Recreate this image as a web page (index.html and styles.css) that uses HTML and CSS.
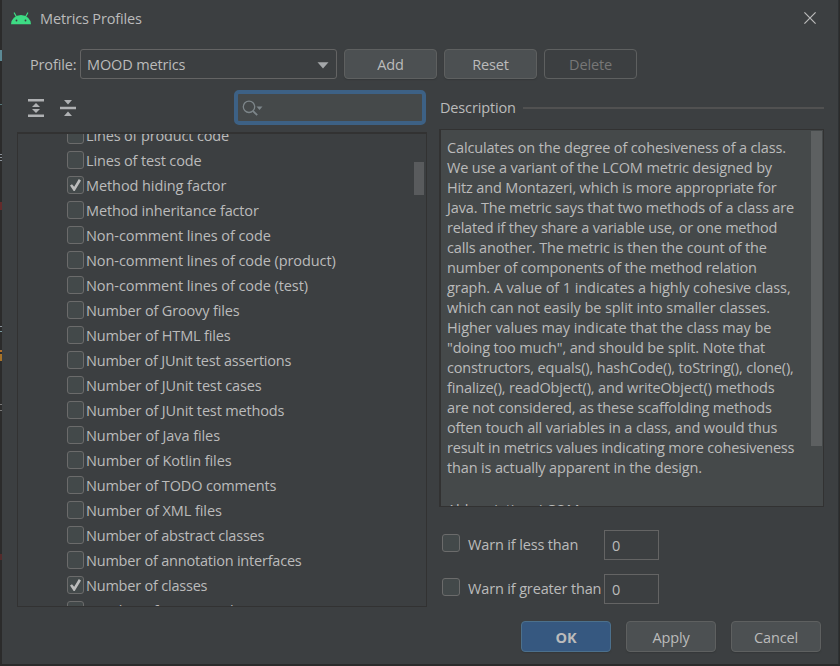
FILE: index.html
```
<!DOCTYPE html>
<html lang="en">
<head>
<meta charset="utf-8">
<title>Metrics Profiles</title>
<link rel="stylesheet" href="styles.css">
</head>
<body>
<div class="dialog">
  <header class="titlebar">
    <svg class="logo" width="20" height="13" viewBox="0 0 20 13"><path d="M0 12.300a10 9.300 0 0 1 20 0z" fill="#3ddc84"/><path d="M3.300 1l2.200 4M16.700 1l-2.200 4" stroke="#3ddc84" stroke-width="1.200" stroke-linecap="round"/><circle cx="5.500" cy="8.500" r=".9" fill="#3c3f41"/><circle cx="14.500" cy="8.500" r=".9" fill="#3c3f41"/></svg>
    <span class="title">Metrics Profiles</span>
    <svg class="close" width="12" height="12" viewBox="0 0 12 12"><path d="M.4.4l11.200 11.200M11.600.4L.4 11.600" stroke="#bbb" stroke-width="1.200"/></svg>
  </header>
  <div class="profile">
    <span class="profile-label">Profile:</span>
    <div class="combo"><span>MOOD metrics</span><svg width="12" height="7" viewBox="0 0 12 7"><path d="M.5.3h11L6 6.500z" fill="#a4a7a9"/></svg></div>
    <button class="btn">Add</button><button class="btn">Reset</button><button class="btn off">Delete</button>
  </div>
  <main class="content">
    <section class="left">
      <div class="tools">
        <svg width="16" height="18" viewBox="0 0 16 18" fill="#afb1b3"><path d="M0 0h16v2.500H0zM0 15.500h16V18H0zM8 4l4 4H4zM8 14l4-4H4z"/></svg>
        <svg width="16" height="18" viewBox="0 0 16 18" fill="#afb1b3"><path d="M0 7.800h16v2.400H0zM8 5.500L12 1H4zM8 12.500l4 4.500H4z"/></svg>
        <div class="search"><svg width="21" height="16" viewBox="0 0 21 16"><circle cx="7" cy="6.800" r="5.700" fill="none" stroke="#7d868a" stroke-width="1.300"/><path d="M11 11l4.200 4.200" stroke="#7d868a" stroke-width="1.800"/><path d="M14.500 6.500h6L17.500 10z" fill="#7d868a"/></svg></div>
      </div>
      <div class="tree">
        <ul class="rows">
          <li><i class="cb"></i>Lines of product code</li>
          <li><i class="cb"></i>Lines of test code</li>
          <li class="wide"><i class="cb on"></i>Method hiding factor</li>
          <li><i class="cb"></i>Method inheritance factor</li>
          <li class="wide"><i class="cb"></i>Non-comment lines of code</li>
          <li class="wide"><i class="cb"></i>Non-comment lines of code (product)</li>
          <li class="wide"><i class="cb"></i>Non-comment lines of code (test)</li>
          <li><i class="cb"></i>Number of Groovy files</li>
          <li><i class="cb"></i>Number of HTML files</li>
          <li class="tight"><i class="cb"></i>Number of JUnit test assertions</li>
          <li><i class="cb"></i>Number of JUnit test cases</li>
          <li><i class="cb"></i>Number of JUnit test methods</li>
          <li class="wide"><i class="cb"></i>Number of Java files</li>
          <li class="wide"><i class="cb"></i>Number of Kotlin files</li>
          <li><i class="cb"></i>Number of TODO comments</li>
          <li class="wide"><i class="cb"></i>Number of XML files</li>
          <li class="tight"><i class="cb"></i>Number of abstract classes</li>
          <li class="tight"><i class="cb"></i>Number of annotation interfaces</li>
          <li class="tight"><i class="cb on"></i>Number of classes</li>
          <li><i class="cb"></i><span class="low">Number of concrete classes</span></li>
        </ul>
        <div class="thumb"></div>
      </div>
    </section>
    <section class="right">
      <h2 class="heading">Description</h2>
      <div class="desc">
        <p>Calculates on the degree of cohesiveness of a class.<br>We use a variant of the LCOM metric designed by<br>Hitz and Montazeri, which is more appropriate for<br>Java. The metric says that two methods of a class are<br><span class="tight">related if they share a variable use, or one method</span><br>calls another. The metric is then the count of the<br>number of components of the method relation<br><span class="wide">graph. A value of 1 indicates a highly cohesive class,</span><br><span class="wide">which can not easily be split into smaller classes.</span><br><span class="wide">Higher values may indicate that the class may be</span><br>"doing too much", and should be split. Note that<br>constructors, equals(), hashCode(), toString(), clone(),<br>finalize(), readObject(), and writeObject() methods<br>are not considered, as these scaffolding methods<br>often touch all variables in a class, and would thus<br><span class="tight">result in metrics values indicating more cohesiveness</span><br>than is actually apparent in the design.</p>
        <p class="more">Abbreviation: LCOM</p>
        <div class="bar"></div>
      </div>
      <div class="warn"><i class="cb"></i><span>Warn if less than</span><div class="num">0</div></div>
      <div class="warn"><i class="cb"></i><span>Warn if greater than</span><div class="num">0</div></div>
    </section>
  </main>
  <footer class="actions"><button class="btn ok">OK</button><button class="btn">Apply</button><button class="btn">Cancel</button></footer>
</div>
</body>
</html>
```
FILE: styles.css
```
* { box-sizing: border-box; }
body {
  margin: 0; color: #bbbbbb; font: 14.500px/20px "Open Sans", "Noto Sans", sans-serif; letter-spacing: -0.150px;
  /* sliver of the editor behind the dialog */
  background: #2b2b2b linear-gradient(#2b2b2b 50px, #5c8a96 50px 61px, #2b2b2b 61px 104px, #55777a 104px 105px, #2b2b2b 105px 154px, #8a929a 154px 155px, #2b2b2b 155px 157px, #8a929a 157px 158px, #2b2b2b 158px 160px, #8a929a 160px 161px, #2b2b2b 161px 202px, #642b2b 202px 210px, #2b2b2b 210px 326px, #8a929a 326px 327px, #2b2b2b 327px 331px, #7b9aa0 331px 332px, #2b2b2b 332px 350px, #b06f2b 350px 352px, #2b2b2b 352px 354px, #a87328 354px 361px, #2b2b2b 361px 404px, #777 404px 405px, #2b2b2b 405px 410px, #777 410px 411px, #2b2b2b 411px 554px, #542b2b 554px 560px, #2b2b2b 560px) no-repeat 0 0 / 2px 666px;
}
.dialog { width: 837px; height: 665px; margin-left: 2px; background: #3c3f41; border-right: 1px solid #2e3133; border-bottom: 1px solid #2b2b2b; overflow: hidden; white-space: nowrap; }
.wide { letter-spacing: -0.080px; }
.tight { letter-spacing: -0.210px; }
.titlebar { height: 37px; display: flex; align-items: center; padding: 0 22px 0 9px; }
.logo { margin-right: 9px; }
.close { margin: -2px 0 0 auto; }
.profile { height: 53px; padding: 12px 0 0 28px; display: flex; gap: 7px; align-items: flex-start; }
.profile-label { width: 50px; line-height: 31px; margin-right: -7px; }
.combo { width: 257px; height: 30px; border: 1px solid #646464; border-radius: 3px; padding: 2px 7px 0 6px; display: flex; align-items: center; justify-content: space-between; }
.btn { width: 93px; height: 31px; padding: 2px 0 0; border: 1px solid #5e6060; border-radius: 4px; background: #4c5052; color: #bbb; font: inherit; letter-spacing: inherit; box-shadow: 0 1px 1px #35383a; }
.profile .btn { height: 30px; }
.btn.off { background: transparent; color: #777; box-shadow: none; }
.content { display: flex; height: 517px; padding-left: 15px; gap: 12px; }
.left { width: 410px; }
.tools { height: 42px; display: flex; align-items: flex-start; padding-left: 11px; gap: 16px; }
.tools > svg { margin-top: 9px; }
.search { width: 192px; height: 35px; margin: 0 1px 0 auto; border: 4px solid #3d6185; border-radius: 5px; background: #45494a; padding: 6px 4px; }
.search svg { display: block; }
.tree { position: relative; height: 475px; border: 1px solid #323232; border-top-width: 2px; overflow: hidden; }
.rows { list-style: none; margin: -11px 0 0; padding: 0 0 0 48.500px; }
.rows li { height: 25px; display: flex; align-items: center; gap: 2px; }
.rows .cb { margin-top: -1px; }
.low { padding-top: 1px; }
.cb { flex: none; width: 17.500px; height: 18px; border: 1px solid #6b6b6b; border-radius: 3px; background: #43494a; }
.cb.on::after { content: ""; display: block; width: 11px; height: 12px; margin: 2px 0 0 2.500px; background: #bbb; clip-path: polygon(0 55%, 18% 43%, 38% 65%, 80% 0, 100% 12%, 43% 100%, 33% 100%); }
.thumb { position: absolute; right: 2px; top: 28px; width: 10px; height: 33px; background: #595b5d; }
.right { width: 385px; padding-top: 8px; }
.heading { display: flex; align-items: center; gap: 7px; margin: 0 0 11px 1px; font: inherit; }
.heading::after { content: ""; flex: 1; height: 2px; background: #515151; }
.desc { position: relative; height: 378px; border: 1px solid #323232; border-left-width: 2px; background: #45494a; padding: 8px 0 0 6px; overflow: hidden; }
.desc p { margin: 0; }
.desc .more { margin-top: 22px; }
.bar { position: absolute; right: 1px; top: 1px; width: 11px; height: 315px; background: #5d6061; }
.warn { display: flex; align-items: center; height: 30px; margin: 23px 0 0 3px; }
.warn + .warn { margin-top: 14px; }
.warn .cb { margin: -4px 8.500px 0 0; }
.warn span { width: 136px; }
.num { width: 55px; height: 30px; border: 1px solid #646464; line-height: 30px; padding-left: 7px; }
.actions { display: flex; justify-content: flex-end; gap: 15px; padding: 14px 17px 0 0; }
.actions .btn { width: 90px; }
.btn.ok { background: #365880; border-color: #4c708c; font-weight: 700; }
```
